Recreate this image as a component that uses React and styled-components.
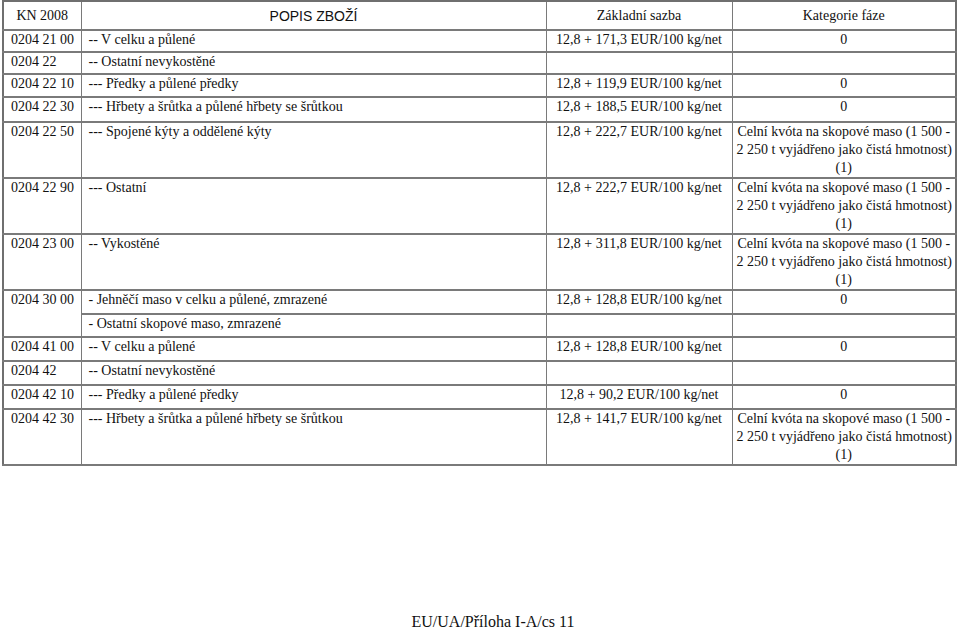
import styled, { createGlobalStyle } from "styled-components";

const GlobalStyle = createGlobalStyle`
  html, body {
    margin: 0;
    padding: 0;
    background: #ffffff;
  }
  body {
    font-family: "Liberation Serif", "Times New Roman", serif;
    color: #111;
  }
`;

const QUOTA = [
  "Celní kvóta na skopové maso (1 500 -",
  "2 250 t vyjádřeno jako čistá hmotnost)",
  "(1)",
];

const rows = [
  { code: "0204 21 00", desc: "-- V celku a půlené", rate: "12,8 + 171,3 EUR/100 kg/net", cat: ["0"], h: 22 },
  { code: "0204 22", desc: "-- Ostatní nevykostěné", rate: "", cat: [], h: 22 },
  { code: "0204 22 10", desc: "--- Předky a půlené předky", rate: "12,8 + 119,9 EUR/100 kg/net", cat: ["0"], h: 23 },
  { code: "0204 22 30", desc: "--- Hřbety a šrůtka a půlené hřbety se šrůtkou", rate: "12,8 + 188,5 EUR/100 kg/net", cat: ["0"], h: 25 },
  { code: "0204 22 50", desc: "--- Spojené kýty a oddělené kýty", rate: "12,8 + 222,7 EUR/100 kg/net", cat: QUOTA },
  { code: "0204 22 90", desc: "--- Ostatní", rate: "12,8 + 222,7 EUR/100 kg/net", cat: QUOTA },
  { code: "0204 23 00", desc: "-- Vykostěné", rate: "12,8 + 311,8 EUR/100 kg/net", cat: QUOTA },
  { code: "0204 30 00", desc: "- Jehněčí maso v celku a půlené, zmrazené", rate: "12,8 + 128,8 EUR/100 kg/net", cat: ["0"], span: 2, h: 24 },
  { code: null, desc: "- Ostatní skopové maso, zmrazené", rate: "", cat: [], h: 23 },
  { code: "0204 41 00", desc: "-- V celku a půlené", rate: "12,8 + 128,8 EUR/100 kg/net", cat: ["0"], h: 24 },
  { code: "0204 42", desc: "-- Ostatní nevykostěné", rate: "", cat: [], h: 24 },
  { code: "0204 42 10", desc: "--- Předky a půlené předky", rate: "12,8 + 90,2 EUR/100 kg/net", cat: ["0"], h: 24 },
  { code: "0204 42 30", desc: "--- Hřbety a šrůtka a půlené hřbety se šrůtkou", rate: "12,8 + 141,7 EUR/100 kg/net", cat: QUOTA },
];

function App() {
  return (
    <Page>
      <GlobalStyle />
      <Table>
        <colgroup>
          <col style={{ width: 78 }} />
          <col style={{ width: 465 }} />
          <col style={{ width: 186 }} />
          <col style={{ width: 224 }} />
        </colgroup>
        <thead>
          <tr>
            <Head>KN 2008</Head>
            <Head $sans>POPIS ZBOŽÍ</Head>
            <Head>Základní sazba</Head>
            <Head>Kategorie fáze</Head>
          </tr>
        </thead>
        <tbody>
          {rows.map((r, i) => (
            <Row key={i} $h={r.h}>
              {r.code !== null && <CodeCell rowSpan={r.span || 1}>{r.code}</CodeCell>}
              <Cell>{r.desc}</Cell>
              <Cell $center>{r.rate}</Cell>
              <Cell $center>
                {r.cat.map((line, j) => (
                  <Line key={j}>{line}</Line>
                ))}
              </Cell>
            </Row>
          ))}
        </tbody>
      </Table>
      <Footer>EU/UA/Příloha I-A/cs 11</Footer>
    </Page>
  );
}

export default App;

const Page = styled.div`
  display: flex;
  flex-direction: column;
  min-height: 631px;
  padding-left: 2px;
  box-sizing: border-box;
`;

const Table = styled.table`
  width: 953px;
  table-layout: fixed;
  border-collapse: collapse;
  border: 2px solid #6f6f6f;
  font-size: 14px;
  line-height: 18px;
`;

const Head = styled.th`
  height: 27px;
  padding: 0 6px;
  border: 1px solid #7a7a7a;
  border-bottom-width: 2px;
  font-weight: normal;
  text-align: center;
  vertical-align: middle;
  font-family: ${(p) => (p.$sans ? '"Liberation Sans", Arial, sans-serif' : '"Liberation Serif", serif')};
`;

const Row = styled.tr`
  height: ${(p) => (p.$h ? `${p.$h}px` : "auto")};
`;

const Cell = styled.td`
  padding: 0 4px;
  border: 1px solid #7a7a7a;
  border-bottom-width: 2px;
  vertical-align: top;
  text-align: ${(p) => (p.$center ? "center" : "left")};
  ${(p) => (p.$center ? "" : "padding-left: 7px;")}
`;

const CodeCell = styled(Cell)`
  padding: 0 2px 0 7px;
  white-space: nowrap;
`;

const Line = styled.div`
  white-space: nowrap;
`;

const Footer = styled.div`
  margin-top: auto;
  padding: 0 0 0 25px;
  text-align: center;
  font-size: 16px;
  line-height: 18px;
`;
